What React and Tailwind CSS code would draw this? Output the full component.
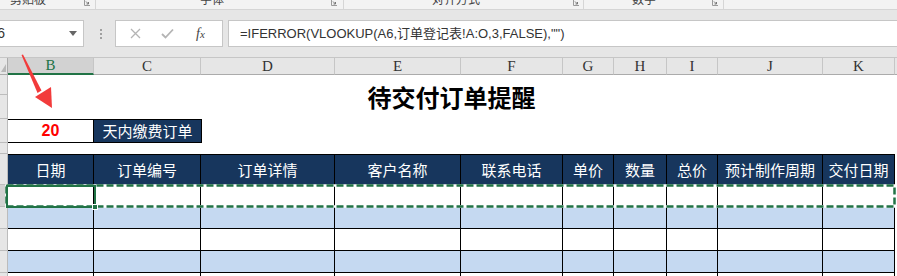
import React from "react";

const cols = [
  { w: "w-[86px]", l: "B", h: "日期" },
  { w: "w-[107px]", l: "C", h: "订单编号" },
  { w: "w-[134px]", l: "D", h: "订单详情" },
  { w: "w-[126px]", l: "E", h: "客户名称" },
  { w: "w-[102px]", l: "F", h: "联系电话" },
  { w: "w-[51px]", l: "G", h: "单价" },
  { w: "w-[53px]", l: "H", h: "数量" },
  { w: "w-[51px]", l: "I", h: "总价" },
  { w: "w-[105px]", l: "J", h: "预计制作周期" },
  { w: "w-[72px]", l: "K", h: "交付日期" },
];

function Launcher({ className }) {
  return (
    <svg className={className} width="6" height="6" viewBox="0 0 6 6">
      <path d="M0.5 0 V5.5 H6" stroke="#9a9a9a" fill="none" strokeWidth="1" />
      <path d="M2 1.5 L4.5 4 M4.5 2 V4 H2.5" stroke="#777" fill="none" strokeWidth="1" />
    </svg>
  );
}

function RowHead({ h, sel }) {
  return (
    <div
      className={`w-[8px] shrink-0 ${h} border-b border-r border-[#bcbcbc] ${
        sel ? "bg-[#d2d2d2]" : "bg-[#e6e6e6]"
      }`}
    />
  );
}

export default function App() {
  const dataRows = [false, true, false, true, false];
  return (
    <div className="relative w-[897px] h-[276px] overflow-hidden bg-white font-['Liberation_Sans','Noto_Sans_CJK_SC',sans-serif]">
      {/* ribbon group labels */}
      <div className="h-[10px] bg-[#f3f3f3] border-b border-[#d5d5d5] flex overflow-hidden text-[12px] leading-[12px] text-[#444] font-['Noto_Sans_CJK_SC',sans-serif]">
        <div className="w-[96px] shrink-0 flex border-r border-[#d6d6d6]">
          <span className="ml-[10px] -mt-[7px]">剪贴板</span>
          <Launcher className="ml-auto mr-[5px]" />
        </div>
        <div className="w-[248px] shrink-0 flex border-r border-[#d6d6d6]">
          <span className="ml-[104px] -mt-[7px]">字体</span>
          <Launcher className="ml-auto mr-[6px]" />
        </div>
        <div className="w-[240px] shrink-0 flex border-r border-[#d6d6d6]">
          <span className="ml-[88px] -mt-[7px]">对齐方式</span>
          <Launcher className="ml-auto mr-[4px]" />
        </div>
        <div className="w-[140px] shrink-0 flex border-r border-[#d6d6d6]">
          <span className="ml-[48px] -mt-[7px]">数字</span>
          <Launcher className="ml-auto mr-[5px]" />
        </div>
      </div>

      {/* formula bar */}
      <div className="h-[47px] bg-[#e6e6e6] flex items-start pt-[10px]">
        <div className="w-[84px] h-[27px] shrink-0 bg-white border border-l-0 border-[#c6c6c6] flex items-center overflow-hidden">
          <span className="ml-[-12px] text-[14px] text-[#333]">B6</span>
          <svg className="ml-auto mr-[6px]" width="8" height="5" viewBox="0 0 8 5">
            <path d="M0 0 H8 L4 5 Z" fill="#666" />
          </svg>
        </div>
        <div className="ml-[15px] w-[3px] h-[27px] flex flex-col items-center justify-center gap-[2px]">
          <div className="w-[2px] h-[2px] bg-[#a0a0a0]" />
          <div className="w-[2px] h-[2px] bg-[#a0a0a0]" />
          <div className="w-[2px] h-[2px] bg-[#a0a0a0]" />
        </div>
        <div className="ml-[13px] w-[108px] h-[27px] shrink-0 bg-white border border-[#c6c6c6] relative flex items-center">
          <svg className="ml-[14px]" width="11" height="11" viewBox="0 0 11 11">
            <path d="M1 1 L10 10 M10 1 L1 10" stroke="#b4b4b4" strokeWidth="1.3" />
          </svg>
          <svg className="ml-[20px]" width="13" height="11" viewBox="0 0 13 11">
            <path d="M1 6 L4.5 9.5 L12 1.5" stroke="#b4b4b4" strokeWidth="1.8" fill="none" />
          </svg>
          <span className="ml-[22px] text-[14px] italic text-[#444] font-['Liberation_Serif',serif]">
            f<span className="text-[11px]">x</span>
          </span>
        </div>
        <div className="ml-[5px] flex-1 h-[27px] bg-white border border-r-0 border-[#c6c6c6] flex items-center pl-[11px] text-[13px] text-[#333] whitespace-nowrap">
          =IFERROR(VLOOKUP(A6,订单登记表!A:O,3,FALSE),"")
        </div>
      </div>

      {/* column headers */}
      <div className="h-[18px] flex bg-[#e6e6e6] border-t border-[#c6c6c6] font-['Liberation_Serif',serif] text-[15px]">
        <div className="w-[8px] shrink-0 border-r border-b border-[#ababab] relative flex items-end justify-end">
          <svg width="5" height="8" viewBox="0 0 5 8" className="mb-[2px] mr-[1px]">
            <path d="M5 0 V8 H0 Z" fill="#b8b8b8" />
          </svg>
        </div>
        {cols.map((c, i) => (
          <div
            key={c.l}
            className={`${c.w} shrink-0 flex items-center justify-center border-r border-[#c6c6c6] ${
              i === 0
                ? "bg-[#d2d2d2] text-[#217346] border-b-2 border-b-[#217346]"
                : "text-[#333] border-b border-b-[#ababab]"
            }`}
          >
            {c.l}
          </div>
        ))}
        <div className="flex-1 border-b border-[#ababab]" />
      </div>

      {/* title rows */}
      <div className="flex h-[44px]">
        <div className="w-[8px] shrink-0 flex flex-col">
          <RowHead h="h-[20px]" />
          <RowHead h="h-[24px]" />
        </div>
        <div className="w-[887px] flex items-center justify-center text-[24px] font-bold text-black font-['Noto_Sans_CJK_SC',sans-serif]">
          待交付订单提醒
        </div>
      </div>

      {/* 20 days row */}
      <div className="flex h-[24px]">
        <RowHead h="h-[24px]" />
        <div className="w-[86px] shrink-0 border border-l-0 border-black bg-white flex items-center justify-center text-[16px] font-bold text-[#ff0000]">
          20
        </div>
        <div className="w-[108px] shrink-0 border-y border-r border-black bg-[#17365d] flex items-center justify-center text-[15px] text-white font-['Noto_Sans_CJK_SC',sans-serif]">
          天内缴费订单
        </div>
      </div>

      {/* spacer row */}
      <div className="flex h-[11px]">
        <RowHead h="h-[11px]" />
      </div>

      {/* table header */}
      <div className="flex h-[31px]">
        <RowHead h="h-[31px]" />
        <div className="flex border-t border-black bg-[#17365d] font-['Noto_Sans_CJK_SC',sans-serif] text-[15px] text-white">
          {cols.map((c) => (
            <div
              key={c.l}
              className={`${c.w} shrink-0 flex items-center justify-center border-r border-black`}
            >
              {c.h}
            </div>
          ))}
        </div>
      </div>

      {/* data rows */}
      {dataRows.map((blue, r) => (
        <div key={r} className="flex h-[22px]">
          <RowHead h="h-[22px]" sel={r === 0} />
          <div className={`flex border-b border-black ${blue ? "bg-[#c5d9f1]" : "bg-white"}`}>
            {cols.map((c) => (
              <div key={c.l} className={`${c.w} shrink-0 border-r border-black`} />
            ))}
          </div>
        </div>
      ))}

      {/* marching ants around copied row */}
      <svg className="absolute left-[5px] top-[184px]" width="892" height="25" viewBox="0 0 892 25">
        <rect x="1.5" y="1.5" width="888" height="21" fill="none" stroke="#ffffff" strokeWidth="2.5" />
        <rect x="1.5" y="1.5" width="888" height="21" fill="none" stroke="#217346" strokeWidth="2.5" strokeDasharray="7 3" />
      </svg>

      {/* active cell */}
      <div className="absolute left-[6px] top-[185px] w-[90px] h-[23px] border-2 border-[#217346]" />
      <div className="absolute left-[92px] top-[204px] w-[6px] h-[6px] bg-[#217346] border border-white" />

      {/* red arrow */}
      <svg className="absolute left-[0px] top-[50px]" width="70" height="70" viewBox="0 50 70 70">
        <polygon points="21.5,55 23,54.5 41.5,90.5 37.5,93" fill="#f23b3b" />
        <polygon points="52,108 35,97 51,87" fill="#f23b3b" />
      </svg>
    </div>
  );
}
